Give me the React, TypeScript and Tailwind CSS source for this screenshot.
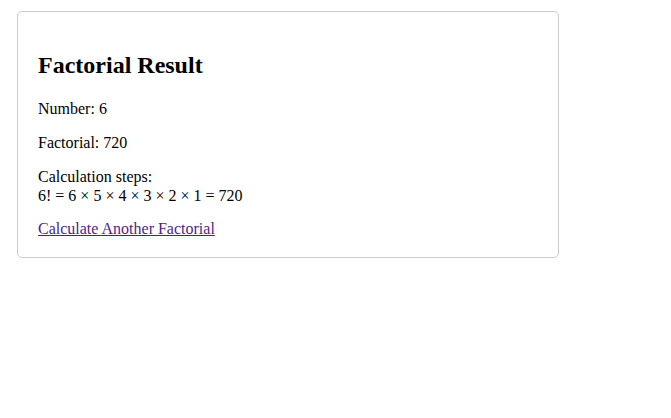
export default function App() {
  return (
    <div className="min-h-[418px] bg-white pt-[11px] pl-[17px] text-black leading-[18.4px]" style={{ fontFamily: '"Liberation Serif", "Times New Roman", serif' }}>
      <div className="w-[542px] rounded-[5px] border border-[#cccccc] px-5 pt-5 pb-[18px] text-[16px] leading-[18.4px]">
        <h2 className="mt-5 mb-5 text-[24px] font-bold leading-[27.6px]">Factorial Result</h2>
        <p className="mb-4">Number: 6</p>
        <p className="mb-4">Factorial: 720</p>
        <p className="mb-[15px]">
          Calculation steps:
          <br />
          6! = 6 × 5 × 4 × 3 × 2 × 1 = 720
        </p>
        <a href="#" className="text-[#551a8b] underline">
          Calculate Another Factorial
        </a>
      </div>
    </div>
  );
}
